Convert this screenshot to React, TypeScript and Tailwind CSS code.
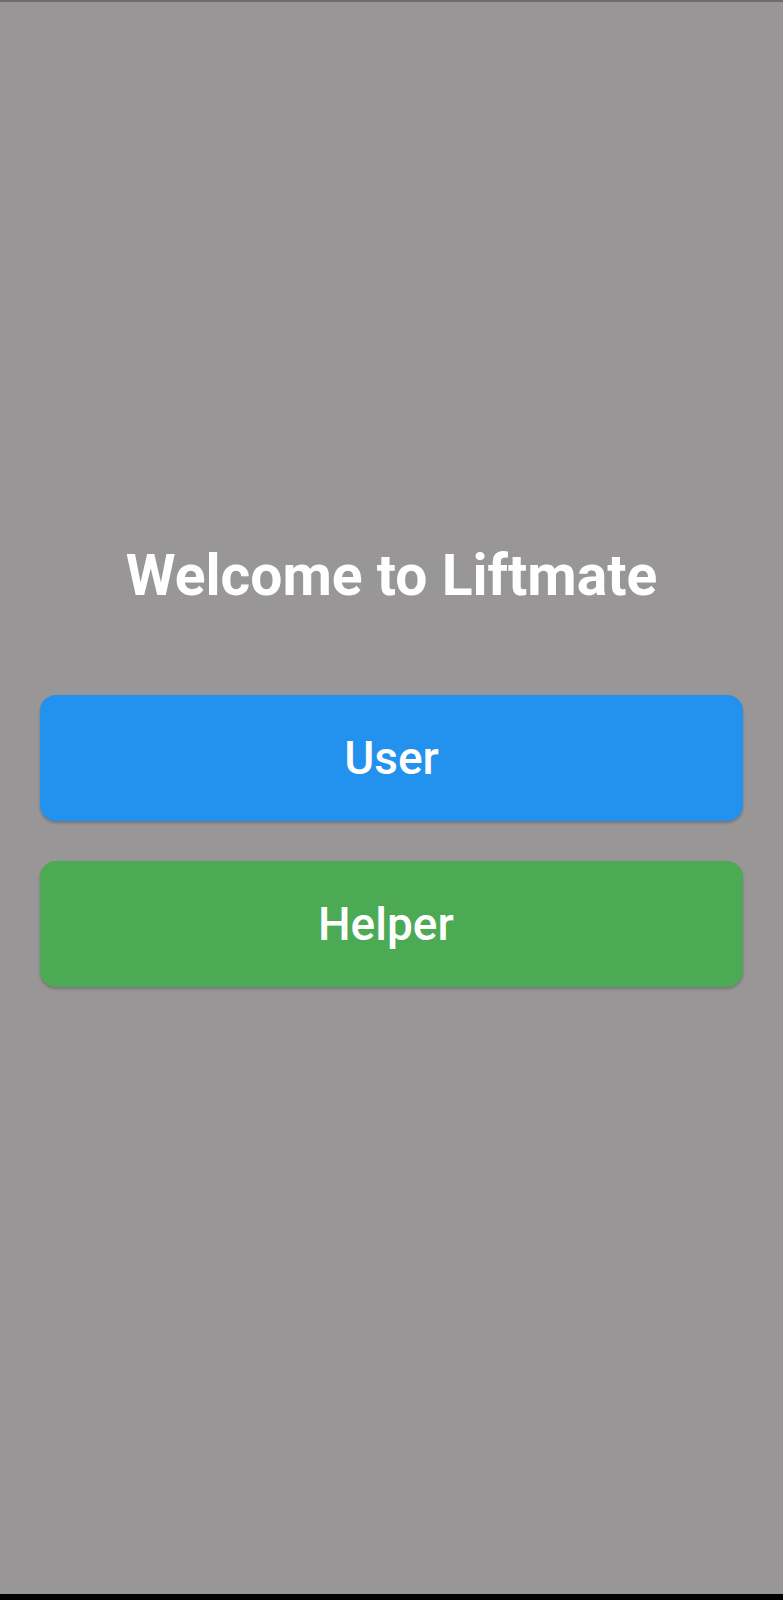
import React from "react";

// "Helper " keeps its trailing space in the source screen, so it sits a little left of centre
const roles = [
  { name: "User", color: "bg-[#2391ee]" },
  { name: "Helper\u00a0", color: "bg-[#4caa54]" },
];

const App = () => {
  return (
    <div
      className="flex min-h-[1600px] w-full flex-col bg-[#989697]"
      style={{ fontFamily: "Roboto, 'Noto Sans', sans-serif" }}
    >
      <div className="h-[2px] bg-[#6d6b6c]" />
      <div className="flex flex-1 flex-col items-stretch px-[40px] pt-[545px]">
        <h1 className="text-center text-[57px] font-bold leading-none text-white">
          Welcome to Liftmate
        </h1>
        <div className="mt-[91px] flex flex-col gap-[40px]">
          {roles.map((role) => (
            <button
              key={role.name}
              className={`flex h-[126px] items-center justify-center rounded-[16px] ${role.color} text-[46px] font-medium text-white shadow-[0_2px_3px_rgba(0,0,0,0.22)]`}
            >
              {role.name}
            </button>
          ))}
        </div>
      </div>
      <div className="h-[6px] bg-black" />
    </div>
  );
};

export default App;
